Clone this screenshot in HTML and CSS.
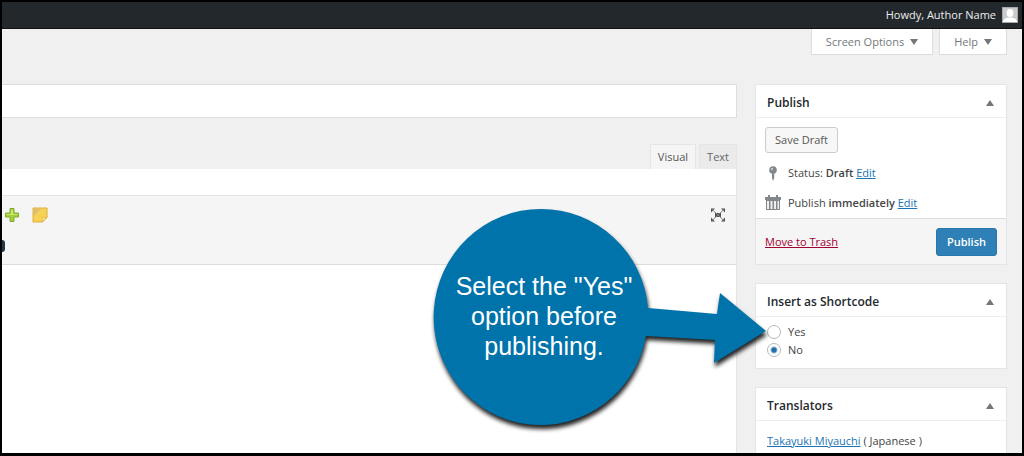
FILE: index.html
```html
<!DOCTYPE html>
<html lang="en">
<head>
<meta charset="utf-8">
<title>Add New Post</title>
<link rel="stylesheet" href="styles.css">
</head>
<body>
<div class="frame">
  <header class="adminbar">
    <span>Howdy, Author Name</span>
    <svg class="avatar" viewBox="0 0 16 16" aria-hidden="true"><rect width="16" height="16" fill="#c9cacc"/><rect x=".5" y=".5" width="15" height="15" fill="none" stroke="#a6a8ab"/><ellipse cx="8" cy="6" rx="3.4" ry="4" fill="#fff"/><path d="M1 15c0-3 3-4.500 7-4.500s7 1.500 7 4.500z" fill="#fff"/></svg>
  </header>
  <div class="meta">
    <button class="meta-button" type="button">Screen Options <svg class="caret" viewBox="0 0 8 6" aria-hidden="true"><path d="M0 0h8L4 6z"/></svg></button>
    <button class="meta-button" type="button">Help <svg class="caret" viewBox="0 0 8 6" aria-hidden="true"><path d="M0 0h8L4 6z"/></svg></button>
  </div>
  <div class="columns">
    <main class="main">
      <input class="title" type="text" aria-label="Post title">
      <div class="tabs">
        <button class="tab tab-active" type="button">Visual</button>
        <button class="tab" type="button">Text</button>
      </div>
      <div class="editor">
        <div class="toolbar">
          <div class="tools">
            <svg class="tool" viewBox="0 0 16 16" aria-hidden="true"><path d="M6 1.500h4V6h4.500v4H10v4.500H6V10H1.500V6H6z" fill="#a5cf35" stroke="#7fab35"/><path d="M7 3h2v4h4v1H3V7h4z" fill="#cbe66c"/></svg>
            <svg class="tool" viewBox="0 0 16 16" aria-hidden="true"><path d="M1 1h14v9.500L10.500 15H1z" fill="#f7d254" stroke="#dfae3c"/><path d="M2 2h7L2 9z" fill="#d9c17c"/><path d="M10 15c1-2 .5-4 0-5 2 1 4 .5 5-.5z" fill="#fff0a0" stroke="#e0a738" stroke-width=".6"/></svg>
            <svg class="expand" viewBox="0 0 16 14" aria-hidden="true"><g fill="#505050"><path d="M5 5h6v4H5z"/><path d="M1 0.500h4L1 4.500zM15 0.500h-4l4 4zM1 13.500h4l-4-4zM15 13.500h-4l4-4z"/></g><path d="M2 1.500l12 11M14 1.500l-12 11" stroke="#808080" stroke-width="1"/></svg>
          </div>
          <span class="knob"></span>
        </div>
      </div>
    </main>
    <aside class="side">
      <section class="card">
        <h2 class="card-head">Publish <svg class="toggle" viewBox="0 0 8 6" aria-hidden="true"><path d="M0 6h8L4 0z"/></svg></h2>
        <div class="publish-body">
          <button class="button" type="button">Save Draft</button>
          <div class="status">
            <svg class="status-icon" viewBox="0 0 16 16" aria-hidden="true"><circle cx="8" cy="5" r="3.800" fill="#82878c"/><path d="M7 8h2.200v5L8 16l-1-3z" fill="#82878c"/><circle cx="7" cy="4" r="1.200" fill="#c5c8cb"/></svg>
            <span>Status: <b>Draft</b> <a href="#">Edit</a></span>
          </div>
          <div class="status">
            <svg class="status-icon" viewBox="0 0 16 16" aria-hidden="true"><g fill="#82878c"><path d="M0 2h16v3H0zM3 0h2v3H3zM11 0h2v3h-2z"/><path d="M1 5h14v10H1z"/></g><path d="M2 6h2v8H2zM5.500 6h2v8h-2zM9 6h2v8H9zM12.500 6H14v8h-1.500z" fill="#eee"/></svg>
            <span>Publish <b>immediately</b> <a href="#">Edit</a></span>
          </div>
        </div>
        <div class="card-foot">
          <a class="trash" href="#">Move to Trash</a>
          <button class="button button-primary" type="button">Publish</button>
        </div>
      </section>
      <section class="card">
        <h2 class="card-head">Insert as Shortcode <svg class="toggle" viewBox="0 0 8 6" aria-hidden="true"><path d="M0 6h8L4 0z"/></svg></h2>
        <div class="options">
          <label class="option"><input class="radio" type="radio" name="shortcode"> Yes</label>
          <label class="option"><input class="radio" type="radio" name="shortcode" checked> No</label>
        </div>
      </section>
      <section class="card">
        <h2 class="card-head">Translators <svg class="toggle" viewBox="0 0 8 6" aria-hidden="true"><path d="M0 6h8L4 0z"/></svg></h2>
        <p class="translator"><a href="#">Takayuki Miyauchi</a> ( Japanese )</p>
      </section>
    </aside>
  </div>
  <div class="callout">
    <svg class="callout-shape" viewBox="0 0 332 216" aria-hidden="true"><path d="M108 0a107 108 0 0 1 107 99l69 6 3-21 46 38-52 32 1-23-69-4A107 108 0 1 1 108 0z" fill="#0073aa"/></svg>
    <p class="callout-text">Select the "Yes"<br>option before<br>publishing.</p>
  </div>
</div>
</body>
</html>
```
FILE: styles.css
```css
* { box-sizing: border-box; }
body {
  margin: 0;
  font-family: "Open Sans", "Noto Sans", sans-serif;
  font-size: 11px;
  line-height: 18px;
  color: #444;
}
button, input { font: inherit; color: inherit; }
a { color: #1b74b3; }
.frame {
  position: relative;
  display: flex;
  flex-direction: column;
  height: 100vh;
  overflow: hidden;
  border: 2px solid #000;
  border-bottom-width: 3px;
  background: #f0f0f0;
}
.adminbar {
  display: flex;
  flex: none;
  align-items: center;
  justify-content: flex-end;
  gap: 6px;
  height: 27px;
  padding-right: 4px;
  background: #23282d;
  border-bottom: 1px solid #111;
  color: #eee;
}
.avatar { width: 16px; height: 16px; }
.meta {
  display: flex;
  flex: none;
  align-items: flex-start;
  justify-content: flex-end;
  gap: 6px;
  height: 55px;
  padding-right: 15px;
}
.meta-button {
  display: flex;
  align-items: center;
  gap: 6px;
  height: 26px;
  padding: 0 14px;
  border: 1px solid #ddd;
  border-top: 0;
  background: #fff;
  color: #72777c;
}
.caret { width: 8px; height: 6px; fill: #72777c; }
.columns {
  display: flex;
  flex: 1;
  gap: 18px;
  min-height: 0;
  padding-right: 15px;
}
.main { display: flex; flex: 1; flex-direction: column; min-width: 0; }
.title {
  width: 100%;
  height: 34px;
  padding: 0 8px;
  border: 1px solid #ddd;
  border-left: 0;
  background: #fff;
}
.tabs {
  display: flex;
  justify-content: flex-end;
  gap: 3px;
  height: 51px;
  padding-top: 26px;
}
.tab {
  padding: 0 7px;
  border: 1px solid #e5e5e5;
  border-bottom: 0;
  background: #ebebeb;
  color: #666;
}
.tab-active { background: #f5f5f5; color: #555; }
.editor {
  flex: 1;
  padding-top: 26px;
  background: #fff;
  border-right: 1px solid #e5e5e5;
}
.toolbar {
  height: 70px;
  padding-top: 11px;
  background: #f5f5f5;
  border-top: 1px solid #e5e5e5;
  border-bottom: 1px solid #ddd;
}
.tools { display: flex; gap: 12px; align-items: center; padding: 0 10px 0 2px; }
.tool { width: 16px; height: 16px; }
.expand { width: 16px; height: 14px; margin-left: auto; }
.knob {
  display: block;
  width: 3px;
  height: 12px;
  margin-top: 17px;
  border-radius: 0 6px 6px 0;
  background: #24384a;
}
.side { display: flex; flex: none; flex-direction: column; gap: 18px; width: 252px; }
.card { flex: none; border: 1px solid #e5e5e5; background: #fff; }
.card-head {
  display: flex;
  align-items: center;
  justify-content: space-between;
  height: 33px;
  margin: 0;
  padding: 3px 12px 0 11px;
  border-bottom: 1px solid #eee;
  font-size: 12px;
  font-weight: 600;
  color: #23282d;
}
.toggle { width: 8px; height: 6px; fill: #72777c; }
.publish-body { padding: 9px 9px 5px; }
.button {
  display: block;
  height: 26px;
  padding: 0 9px;
  border: 1px solid #ccc;
  border-radius: 3px;
  background: #f7f7f7;
  color: #555;
}
.status { display: flex; align-items: center; gap: 7px; margin-top: 10px; height: 20px; }
.status b { font-weight: 600; }
.status-icon { width: 16px; height: 16px; }
.card-foot {
  display: flex;
  align-items: center;
  justify-content: space-between;
  height: 46px;
  padding: 0 9px;
  border-top: 1px solid #ddd;
  background: #f5f5f5;
}
.trash { color: #a00032; }
.button-primary {
  height: 28px;
  padding: 0 10px;
  border-color: #2a76a8;
  background: #2e80b6;
  color: #fff;
  font-weight: 600;
}
.options { padding: 6px 11px 9px; }
.option { display: flex; align-items: center; gap: 7px; height: 18px; }
.radio {
  width: 14px;
  height: 14px;
  margin: 0;
  appearance: none;
  border: 1px solid #b4b9be;
  border-radius: 50%;
  background: #fff;
}
.radio:checked { background: radial-gradient(circle, #1e6fa8 2px, #fff 4px); }
.translator { margin: 0; padding: 11px; }
.callout { position: absolute; left: 431px; top: 207px; width: 332px; }
.callout-shape {
  display: block;
  width: 100%;
  overflow: visible;
  filter: drop-shadow(1px 4px 2px #222);
}
.callout-text {
  position: absolute;
  top: 62px;
  left: 0;
  width: 222px;
  margin: 0;
  font-family: "Liberation Sans", Arial, sans-serif;
  font-size: 25px;
  line-height: 30px;
  text-align: center;
  color: #fff;
}
```
